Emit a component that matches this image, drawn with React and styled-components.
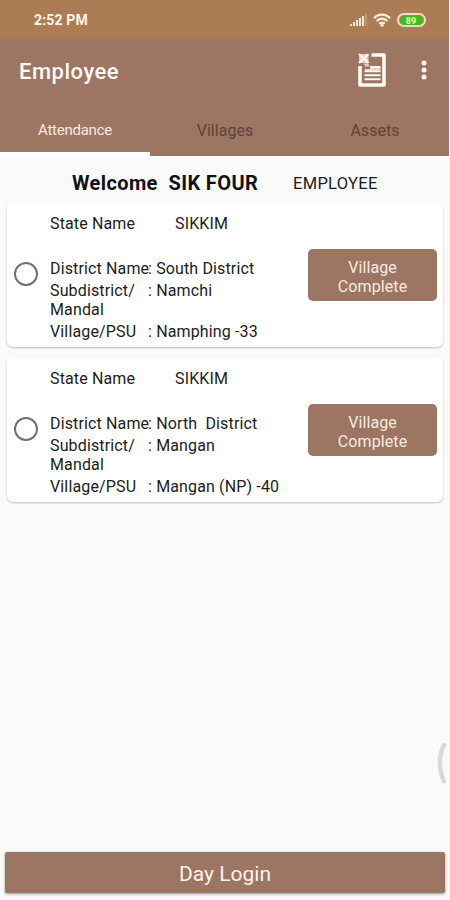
import React from 'react';
import styled, { createGlobalStyle } from 'styled-components';

const GlobalStyle = createGlobalStyle`
    * {
        box-sizing: border-box;
    }

    body {
        margin: 0;
        background: #fafafa;
        font-family: Roboto, "Noto Sans", sans-serif;
        color: #1c1c1c;
    }

    button {
        border: 0;
        padding: 0;
        font-family: inherit;
    }
`;

const Screen = styled.div`
    position: relative;
    display: flex;
    flex-direction: column;
    width: 450px;
    height: 900px;
    overflow: hidden;
    background: #fafafa;
`;

const Header = styled.header`
    width: 448.5px;
    height: 156px;
    background: #9c7563;
`;

const StatusBar = styled.div`
    display: flex;
    align-items: center;
    height: 38px;
    padding: 2px 23px 0 34px;
    background: #ac7d54;
    color: #fff5ea;
`;

const Clock = styled.span`
    flex: 1;
    font-size: 14px;
    font-weight: 700;
    letter-spacing: 0.15px;
`;

const StatusIcons = styled.div`
    display: flex;
    align-items: center;
    gap: 6px;
`;

const Battery = styled.span`
    display: flex;
    align-items: center;
    justify-content: center;
    width: 29px;
    height: 14px;
    border: 2px solid #f3d9c0;
    border-radius: 8px;
    background: #ac7d54;
`;

const BatteryLevel = styled.span`
    width: 23px;
    height: 9px;
    border-radius: 5px;
    background: #3fbd12;
    color: #e8ffdc;
    font-size: 9px;
    font-weight: 700;
    line-height: 10px;
    text-align: center;
`;

const Toolbar = styled.div`
    display: flex;
    align-items: center;
    height: 64px;
    padding: 0 22px 0 19px;
`;

const Title = styled.h1`
    flex: 1;
    margin: 0;
    padding-top: 3px;
    color: #fff8f3;
    font-size: 22px;
    font-weight: 500;
    letter-spacing: 0.5px;
`;

const ReportIcon = styled.svg`
    display: block;
    margin-right: 34px;
`;

const MenuIcon = styled.svg`
    display: block;
`;

const Tabs = styled.nav`
    display: grid;
    grid-template-columns: repeat(3, 150px);
    height: 54px;
`;

const Tab = styled.button`
    height: 54px;
    padding-top: 6px;
    border-bottom: 4px solid ${({ $active }) => ($active ? '#fff' : 'transparent')};
    background: transparent;
    color: ${({ $active }) => ($active ? '#f8e9e0' : '#604237')};
    font-size: ${({ $active }) => ($active ? '15px' : '16px')};
    letter-spacing: ${({ $active }) => ($active ? '-0.25px' : '0.05px')};
`;

const Welcome = styled.div`
    display: flex;
    align-items: center;
    height: 46px;
    padding: 8px 0 0 72px;
`;

const WelcomeName = styled.span`
    width: 221px;
    color: #111;
    font-size: 20px;
    font-weight: 700;
    letter-spacing: 0.38px;
    white-space: pre;
`;

const Role = styled.span`
    font-size: 16.5px;
    letter-spacing: 0.3px;
`;

const CardList = styled.main`
    display: flex;
    flex: 1;
    flex-direction: column;
    gap: 10px;
    padding: 0 7px;
`;

const Card = styled.article`
    display: flex;
    align-items: center;
    width: 436px;
    height: 145px;
    padding: 0 6px 0 7px;
    border-radius: 6px;
    background: #fff;
    box-shadow: 0 1px 2px rgba(0, 0, 0, 0.24);
`;

const Radio = styled.span`
    width: 24px;
    height: 24px;
    margin-bottom: 1px;
    border: 2px solid #707070;
    border-radius: 50%;
`;

const Details = styled.div`
    flex: 1;
    height: 145px;
    padding: 12px 0 0 12px;
    font-size: 16px;
    letter-spacing: 0.14px;
    line-height: 19px;
`;

const Field = styled.div`
    display: flex;
    margin-bottom: ${({ $gap }) => $gap || '3px'};
`;

const Label = styled.span`
    width: ${({ $width }) => $width || '98px'};
    white-space: nowrap;
`;

const Value = styled.span`
    white-space: pre;
`;

const CompleteButton = styled.button`
    width: 129px;
    height: 52px;
    padding-top: 4px;
    border-radius: 5px;
    background: #9c7563;
    color: #fbeae0;
    font-size: 16px;
    letter-spacing: 0.1px;
    line-height: 19px;
`;

const Footer = styled.footer`
    height: 48px;
    padding: 0 5px;
`;

const LoginButton = styled.button`
    display: block;
    width: 440px;
    height: 41px;
    padding-top: 3px;
    border-radius: 2px;
    background: #9c7563;
    box-shadow: 0 1px 3px rgba(0, 0, 0, 0.4);
    color: #fff3ea;
    font-size: 21px;
`;

// handle that peeks out from the right screen edge
const EdgeHandle = styled.svg`
    position: absolute;
    top: 740px;
    right: 3px;
`;

const villages = [
    { state: 'SIKKIM', district: 'South District', subdistrict: 'Namchi', village: 'Namphing -33' },
    { state: 'SIKKIM', district: 'North  District', subdistrict: 'Mangan', village: 'Mangan (NP) -40' },
];

const SignalIcon = () => (
    <svg width="18" height="14" viewBox="0 0 18 14" fill="none" stroke="#f8e6d5" strokeWidth="2">
        <path d="M2 11V13M5 9V13M8 7V13M11 5V13M14 3V13" />
        <path d="M16.8 1V13" strokeWidth="1" opacity="0.5" />
    </svg>
);

const WifiIcon = () => (
    <svg width="18" height="14" viewBox="0 0 18 14" fill="none" stroke="#fff0e2" strokeWidth="2.3">
        <path d="M1 5.2C5.4 0.5 12.6 0.5 17 5.2M3.7 8C6.8 4.8 11.2 4.8 14.3 8M6.3 10.8C7.9 9.2 10.1 9.2 11.7 10.8" />
        <circle cx="9" cy="12.2" r="1.5" fill="#fff0e2" stroke="none" />
    </svg>
);

const VillageCard = ({ item }) => (
    <Card>
        <Radio />
        <Details>
            <Field $gap="26px">
                <Label $width="125px">State Name</Label>
                <Value>{item.state}</Value>
            </Field>
            <Field>
                <Label>District Name</Label>
                <Value>: {item.district}</Value>
            </Field>
            <Field>
                <Label>Subdistrict/<br />Mandal</Label>
                <Value>: {item.subdistrict}</Value>
            </Field>
            <Field>
                <Label>Village/PSU</Label>
                <Value>: {item.village}</Value>
            </Field>
        </Details>
        <CompleteButton>Village<br />Complete</CompleteButton>
    </Card>
);

const App = () => {
    return (
        <Screen>
            <GlobalStyle />
            <Header>
                <StatusBar>
                    <Clock>2:52 PM</Clock>
                    <StatusIcons>
                        <SignalIcon />
                        <WifiIcon />
                        <Battery>
                            <BatteryLevel>89</BatteryLevel>
                        </Battery>
                    </StatusIcons>
                </StatusBar>
                <Toolbar>
                    <Title>Employee</Title>
                    <ReportIcon width="30" height="36" viewBox="0 0 30 36" fill="none" stroke="#fff8f2">
                        <path d="M14.5 3H27V33H3V14" strokeWidth="3.6" strokeLinejoin="round" />
                        <path d="M13 14.8H23.5V18.5H8V17H13Z" fill="#ead6cb" stroke="none" />
                        <path d="M13 15H23.5M7.5 19.3H23.5M7.5 23.3H23.5M7.5 27.3H23.5" strokeWidth="1.9" />
                        <rect x="2" y="2" width="9.5" height="9" fill="#e5cfc4" stroke="none" />
                        <path d="M2 2L11.5 11M11.5 2L2 11" strokeWidth="2" />
                        <path d="M7 11.5H11L12.5 14.5H8Z" fill="#e5cfc4" stroke="none" />
                    </ReportIcon>
                    <MenuIcon width="6" height="20" viewBox="0 0 6 20" fill="#fff8f2">
                        <circle cx="3" cy="3" r="2.5" />
                        <circle cx="3" cy="10" r="2.5" />
                        <circle cx="3" cy="17" r="2.5" />
                    </MenuIcon>
                </Toolbar>
                <Tabs>
                    <Tab $active>Attendance</Tab>
                    <Tab>Villages</Tab>
                    <Tab>Assets</Tab>
                </Tabs>
            </Header>
            <Welcome>
                <WelcomeName>Welcome  SIK FOUR</WelcomeName>
                <Role>EMPLOYEE</Role>
            </Welcome>
            <CardList>
                {villages.map((item) => (
                    <VillageCard key={item.village} item={item} />
                ))}
            </CardList>
            <Footer>
                <LoginButton>Day Login</LoginButton>
            </Footer>
            <EdgeHandle width="10" height="46" viewBox="0 0 10 46" fill="none">
                <path d="M7 5C1.5 16 1.5 30 7 41" stroke="#d9d9d9" strokeWidth="4.5" strokeLinecap="round" />
            </EdgeHandle>
        </Screen>
    );
}

export default App;
